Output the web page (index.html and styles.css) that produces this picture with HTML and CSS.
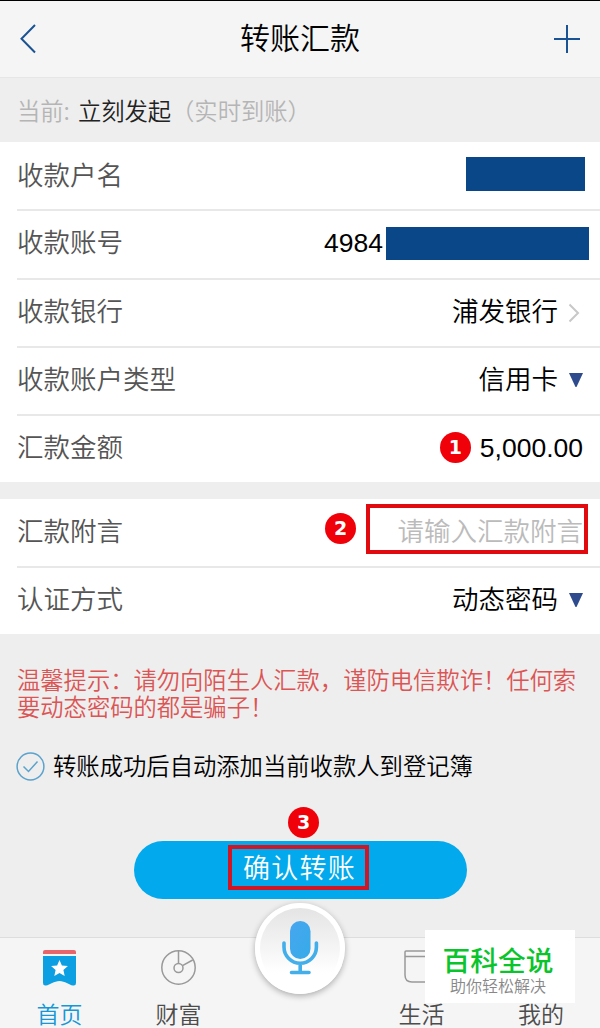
FILE: index.html
```
<!DOCTYPE html>
<html lang="zh-CN">
<head>
<meta charset="utf-8">
<title>转账汇款</title>
<link rel="stylesheet" href="styles.css">
</head>
<body>
<div class="app">
  <header class="header">
    <svg class="back" width="18" height="32" viewBox="0 0 18 32"><path d="M16 2 2.500 15.800 16 29.500" fill="none" stroke="#1a5393" stroke-width="2"/></svg>
    <h1 class="title">转账汇款</h1>
    <svg class="add" width="28" height="30" viewBox="0 0 28 30"><path d="M1 15h26M14 1v28" fill="none" stroke="#1a5393" stroke-width="2"/></svg>
  </header>

  <div class="status"><span>当前:</span><span class="status-now">立刻发起</span><span class="status-note">（实时到账）</span></div>

  <section class="group">
    <div class="row"><span class="label">收款户名</span><span class="mask mask-name"></span></div>
    <div class="row"><span class="label">收款账号</span><span class="number">4984</span><span class="mask mask-account"></span></div>
    <div class="row"><span class="label">收款银行</span><span class="value">浦发银行</span>
      <svg class="chevron" width="12" height="20" viewBox="0 0 12 20"><path d="m1.500 1.500 8.500 8.500-8.500 8.500" fill="none" stroke="#c8c8c8" stroke-width="2"/></svg></div>
    <div class="row"><span class="label">收款账户类型</span><span class="value">信用卡</span>
      <svg class="caret" width="14" height="14" viewBox="0 0 14 14"><path d="M0 0h14L7.500 14h-1z" fill="#2d4b8d"/></svg></div>
    <div class="row"><span class="label">汇款金额</span><span class="badge badge-amount">1</span><span class="number amount">5,000.00</span></div>
  </section>

  <section class="group group-second">
    <div class="row"><span class="label">汇款附言</span><span class="badge badge-remark">2</span><span class="remark">请输入汇款附言</span></div>
    <div class="row"><span class="label">认证方式</span><span class="value">动态密码</span>
      <svg class="caret" width="14" height="14" viewBox="0 0 14 14"><path d="M0 0h14L7.500 14h-1z" fill="#2d4b8d"/></svg></div>
  </section>

  <p class="tip">温馨提示：请勿向陌生人汇款，谨防电信欺诈！任何索<br>要动态密码的都是骗子！</p>

  <div class="check">
    <svg width="29" height="29" viewBox="0 0 29 29" fill="none" stroke="#5ba3cc"><circle cx="14.500" cy="14.500" r="13.400" stroke-width="1.500"/><path d="m7.500 14.500 5 5 9-10" stroke-width="1.500"/></svg>
    <span>转账成功后自动添加当前收款人到登记簿</span>
  </div>

  <div class="action">
    <span class="badge">3</span>
    <div class="submit"><span class="submit-text">确认转账</span></div>
  </div>

  <nav class="tabs">
    <div class="tab tab-active">
      <svg width="36" height="38" viewBox="0 0 36 38"><path d="M1 5V3a2 2 0 0 1 2-2h29a2 2 0 0 1 2 2v2z" fill="#e8656b"/><path d="M1 7h33v27q0 3-3 2.500c-4-.5-8-4.500-13.500-4.500S8 36 4 36.500q-3 .5-3-2.500z" fill="#0c9fe2"/><path d="m17.500 11 2.400 5.500 6 .6-4.500 4 1.300 5.900-5.200-3.100-5.200 3.100 1.300-5.900-4.500-4 6-.6z" fill="#fff"/></svg>
      <span>首页</span>
    </div>
    <div class="tab">
      <svg width="36" height="38" viewBox="0 0 36 38" fill="none" stroke="#999" stroke-width="1.500"><circle cx="17.500" cy="18.500" r="16.700"/><circle cx="17.500" cy="19" r="4.500"/><path d="M17.500 1.800v12.700M21.500 16.700 31.700 11"/></svg>
      <span>财富</span>
    </div>
    <div class="mic-slot">
      <div class="mic">
        <svg width="38" height="56" viewBox="0 0 38 56"><defs><linearGradient id="g" x2="1" y2="1"><stop stop-color="#48a6f0"/><stop offset="1" stop-color="#35abe8"/></linearGradient></defs><rect x="9" y="0" width="20.500" height="38" rx="10.200" fill="url(#g)"/><path d="M3 22v4a16.200 16.200 0 0 0 32.400 0v-4M19.200 43v8M10.500 51.500h17.500" fill="none" stroke="#42aeea" stroke-width="3.600" stroke-linecap="round"/></svg>
      </div>
    </div>
    <div class="tab">
      <svg width="36" height="38" viewBox="0 0 36 38" fill="none" stroke="#999" stroke-width="1.500"><path d="M1 7.500V3q0-1 1-1h32q1 0 1 1v23q0 7-7 7H8q-7 0-7-7V7.500h34"/></svg>
      <span>生活</span>
    </div>
    <div class="tab">
      <svg width="36" height="38"></svg>
      <span>我的</span>
    </div>
    <div class="watermark"><strong>百科全说</strong><small>助你轻松解决</small></div>
  </nav>
</div>
</body>
</html>
```
FILE: styles.css
```
* { box-sizing: border-box; }
body {
  margin: 0;
  background: #eee;
  font-family: "Noto Sans CJK SC", "Noto Sans", sans-serif;
  font-weight: 350;
  color: #000;
}
.app { width: 600px; height: 1028px; display: flex; flex-direction: column; overflow: hidden; white-space: nowrap; }
svg { display: block; flex: none; }
.header {
  height: 78px;
  border-top: 1px solid #000;
  border-bottom: 1px solid #e6e6e6;
  background: #f5f5f5;
  display: grid;
  grid-template-columns: 60px 1fr 60px;
  align-items: center;
  padding: 0 19px;
}
.title { margin: 0; text-align: center; font-size: 30px; line-height: 40px; font-weight: 350; padding-bottom: 6px; }
.add { justify-self: end; }
.status { height: 64.400px; display: flex; align-items: center; padding: 0 17px; font-size: 23.300px; line-height: 30px; color: #b5b5b5; }
.status-now { margin-left: 8px; color: #222; }
.group { background: #fff; display: flex; flex-direction: column; }
.group-second { margin-top: 16.500px; }
.row { height: 67px; margin-left: 17px; padding: 0 17px 1px 0; display: flex; align-items: center; font-size: 26.500px; line-height: 36px; }
.row + .row { height: 68.200px; border-top: 2px solid #e8e8e8; padding-bottom: 3px; }
.label { margin-right: auto; color: #555; padding-bottom: 3px; }
.value { padding-bottom: 3px; }
.number { font-family: "Liberation Sans", sans-serif; font-weight: 400; font-size: 26.500px; }
.mask { background: #0a4788; }
.mask-name { width: 119px; height: 34px; margin-right: -2px; margin-bottom: 3px; }
.mask-account { width: 203px; height: 33px; margin: 1px -6px 0 3px; }
.chevron { margin: 3px 3px 0 10px; }
.caret { margin: 2px 0 0 11px; }
.badge {
  width: 31px;
  height: 31px;
  border-radius: 50%;
  background: #f00008;
  color: #fff;
  display: grid;
  place-items: center;
  font: 700 19px/31px "DejaVu Sans", sans-serif;
}
.badge-amount { margin: 0 9px 1px 0; }
.badge-remark { margin: 0 10px 6px 0; }
.remark { width: 222px; height: 50px; margin: 0 -5px 5px 0; border: 4px solid #e10b0f; color: #bbb; text-align: right; line-height: 42px; padding-right: 1px; padding-top: 1px; }
.tip { margin: 32px 17px 0; font-size: 23.300px; line-height: 27px; color: #dc5555; }
.check { display: flex; align-items: center; gap: 8px; margin: 31px 0 0 16px; height: 32px; font-size: 23.330px; line-height: 30px; }
.check span { padding-bottom: 3px; }
.action { margin-top: 24px; height: 92px; display: flex; flex-direction: column; align-items: center; }
.action .badge { margin: 0 0 3px 7px; }
.submit { width: 333px; height: 58px; border-radius: 29px; background: #02a9ec; display: flex; justify-content: center; padding-top: 4px; }
.submit-text { width: 141px; height: 45px; margin-left: -3px; border: 4px solid #d01624; color: #fff; font-size: 27px; line-height: 36px; letter-spacing: 1.300px; text-align: center; padding-left: 2px; }
.tabs {
  position: relative;
  margin-top: auto;
  height: 91px;
  border-top: 1px solid #ddd;
  background: #f5f5f5;
  display: grid;
  grid-template-columns: 119px 119px 123px 121px 118px;
}
.tab { display: flex; flex-direction: column; align-items: center; padding-top: 11px; font-size: 23px; line-height: 30px; color: #4c4c4c; gap: 11px; }
.tab-active { color: #1597d8; }
.mic-slot { display: flex; justify-content: center; }
.mic {
  width: 90px;
  height: 91px;
  margin-top: -35px;
  border: 5px solid #fff;
  border-radius: 50%;
  background: linear-gradient(#e4e4e4, #fff 80%);
  box-shadow: 0 2px 6px rgba(0, 0, 0, .3);
  display: flex;
  justify-content: center;
  padding-top: 13px;
}
.watermark { position: absolute; left: 425px; top: -8px; width: 150px; height: 73px; background: #fff; display: flex; flex-direction: column; align-items: center; }
.watermark strong { font-size: 27.700px; line-height: 34px; font-weight: 500; color: #09c42b; margin: 12px 4px 0 0; }
.watermark small { font-size: 16px; line-height: 18px; color: #888; margin-right: 4px; }
```
